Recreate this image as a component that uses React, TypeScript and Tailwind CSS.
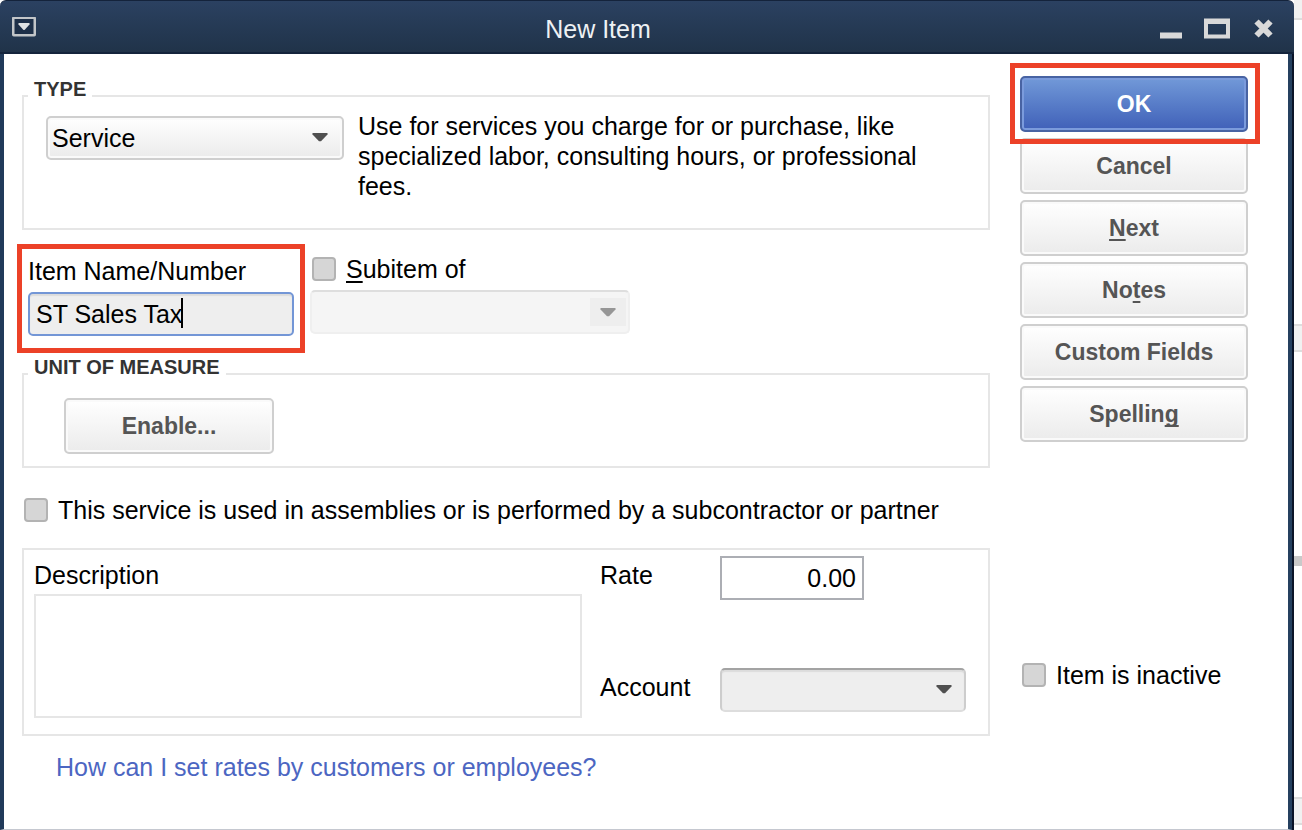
import type { ReactNode } from "react";

function Chevron({ className = "" }: { className?: string }) {
  return (
    <svg
      viewBox="0 0 16 10"
      className={`pointer-events-none h-2.5 w-4 ${className}`}
      fill="currentColor"
      aria-hidden="true"
    >
      <path d="M0.500 1h15v1.500L9 9.300H7L0.500 2.500z" />
    </svg>
  );
}

function GroupBox({ title, className, children }: { title: string; className: string; children: ReactNode }) {
  return (
    <fieldset className={`min-w-0 border-2 border-[#e6e6e6] ${className}`}>
      <legend className="ml-1 px-1.5 pb-3.5 text-[20px] leading-4 font-bold text-[#333333]">{title}</legend>
      {children}
    </fieldset>
  );
}

function Check({ id, children }: { id: string; children: ReactNode }) {
  return (
    <div className="flex items-center gap-2.5 pl-0.5">
      <input
        id={id}
        type="checkbox"
        className="size-6 shrink-0 appearance-none rounded-[4px] border-2 border-[#b3b3b3] bg-[#d6d6d6] checked:bg-[#8fa9dc]"
      />
      <label htmlFor={id}>{children}</label>
    </div>
  );
}

function Key({ children }: { children: ReactNode }) {
  return (
    <u className="underline decoration-2 underline-offset-3 [text-decoration-skip-ink:none]">{children}</u>
  );
}

function PushButton({ children }: { children: ReactNode }) {
  return (
    <button
      type="button"
      className="h-14 w-full rounded-[5px] border-2 border-[#cfcfcf] bg-linear-to-b from-white to-[#ebebeb] text-[23px] font-bold text-[#555555] shadow-[inset_0_0_0_2px_#fafafa]"
    >
      {children}
    </button>
  );
}

function TitleBar() {
  return (
    <header className="flex h-[54px] items-center rounded-t-md border-t border-b-2 border-t-[#14233b] border-b-[#14243c] bg-linear-to-b from-[#2b4161] to-[#203349] pr-[18px] pl-3 text-[#d6d9dc]">
      <button type="button" aria-label="Window menu" className="h-5 w-6">
        <svg viewBox="0 0 24 20" className="h-5 w-6" aria-hidden="true">
          <rect x="1.250" y="0.750" width="21.500" height="17.500" rx="0.500" fill="#1d2f48" stroke="#c2c5c8" strokeWidth="2.500" />
          <path d="M6.500 6h11v1.500L12.500 13h-1L6.500 7.500z" fill="#dfe1e3" />
        </svg>
      </button>
      <h1 className="flex-1 pt-1 text-center text-[25px] leading-[30px] text-[#eef1f4]">New Item</h1>
      <div className="flex items-center gap-5 pt-1">
        <button type="button" aria-label="Minimize" className="h-6 w-6">
          <svg viewBox="0 0 24 24" className="size-6" aria-hidden="true">
            <rect x="0" y="15.500" width="22" height="6" fill="#d9d9d9" />
          </svg>
        </button>
        <button type="button" aria-label="Maximize" className="h-6 w-7">
          <svg viewBox="0 0 28 24" className="h-6 w-7" aria-hidden="true">
            <path d="M0 1.500h26v20H0z M4 7v10.500h18V7z" fill="#d9d9d9" fillRule="evenodd" />
          </svg>
        </button>
        <button type="button" aria-label="Close" className="h-6 w-6">
          <svg viewBox="0 0 24 24" className="size-6" aria-hidden="true">
            <path d="M4.500 4.500 18.500 18.500M18.500 4.500 4.500 18.500" stroke="#d9d9d9" strokeWidth="6" />
          </svg>
        </button>
      </div>
    </header>
  );
}

export default function App() {
  return (
    <div className="flex min-h-screen bg-white font-['Liberation_Sans',Arial,sans-serif] text-[25px] leading-[30px] text-black">
      <div className="flex min-w-0 flex-1 flex-col">
        <TitleBar />
        <main className="flex flex-1 border-r-2 border-r-[#0a1428]">
          <form className="flex flex-1 gap-[30px] border-r-4 border-b border-l-4 border-r-[#25405f] border-b-[#c5c8d0] border-l-[#213a5a] bg-white pt-[22px] pr-10 pl-[18px]">
            <div className="flex min-w-0 flex-1 flex-col pt-[5px]">
              <GroupBox title="TYPE" className="pb-[27px]">
                <div className="flex gap-3.5 pr-10 pl-[22px]">
                  <div className="relative mt-[5px] h-11 w-[298px] shrink-0">
                    <select
                      aria-label="Type"
                      className="size-full appearance-none rounded-[5px] border-2 border-[#cfcfcf] bg-linear-to-b from-white to-[#ebebeb] pl-1 shadow-[inset_0_0_0_2px_#fafafa]"
                    >
                      <option>Service</option>
                    </select>
                    <Chevron className="absolute top-4 right-4 text-[#505050]" />
                  </div>
                  <p>
                    Use for services you charge for or purchase, like specialized labor, consulting hours, or
                    professional fees.
                  </p>
                </div>
              </GroupBox>

              <div className="mt-6 flex gap-4 pl-1.5">
                <div className="relative mt-0.5 flex w-[266px] flex-col gap-1.5">
                  <label htmlFor="item-name">Item Name/Number</label>
                  <div className="relative h-11">
                    <input
                      id="item-name"
                      defaultValue="ST Sales Tax"
                      className="size-full rounded-[5px] border-2 border-[#7396d6] bg-[#eeeeee] pl-1.5 caret-transparent shadow-[inset_0_2px_1px_#dcdcdc] outline-none"
                    />
                    <span className="absolute top-1.5 left-[153px] h-[30px] w-0.5 bg-black" />
                  </div>
                  <div className="pointer-events-none absolute -inset-x-[11px] -top-3 -bottom-[17px] border-5 border-[#ec4128]" />
                </div>
                <div className="flex w-80 flex-col gap-1.5">
                  <Check id="subitem">
                    <Key>S</Key>ubitem of
                  </Check>
                  <div className="relative h-11">
                    <select
                      aria-label="Parent item"
                      disabled
                      className="size-full appearance-none rounded-[5px] border-2 border-[#efefef] border-t-[#dedede] bg-[#f5f5f5]"
                    />
                    <span className="absolute top-2 right-1 flex h-7 w-9 items-center justify-center bg-[#eeeeee]">
                      <Chevron className="text-[#969696]" />
                    </span>
                  </div>
                </div>
              </div>

              <GroupBox title="UNIT OF MEASURE" className="mt-[23px] pt-[9px] pb-3">
                <div className="ml-10 w-[210px]">
                  <PushButton>Enable...</PushButton>
                </div>
              </GroupBox>

              <div className="mt-[27px]">
                <Check id="assemblies">
                  This service is used in assemblies or is performed by a subcontractor or partner
                </Check>
              </div>

              <section className="mt-[23px] flex gap-[18px] border-2 border-[#e6e6e6] pt-1.5 pr-[22px] pb-4 pl-2.5">
                <div className="flex flex-1 flex-col gap-1 pt-1">
                  <label htmlFor="description">Description</label>
                  <textarea
                    id="description"
                    className="h-[124px] w-full resize-none border-2 border-[#e6e6e6] bg-white px-1.5 outline-none"
                  />
                </div>
                <div className="grid grid-cols-[120px_246px] content-start gap-y-[68px]">
                  <label htmlFor="rate" className="pt-1">
                    Rate
                  </label>
                  <input
                    id="rate"
                    defaultValue="0.00"
                    className="h-11 w-36 border-2 border-[#acaeb4] bg-white pr-1.5 text-right outline-none"
                  />
                  <label htmlFor="account" className="pt-1">
                    Account
                  </label>
                  <div className="relative h-11">
                    <select
                      id="account"
                      className="size-full appearance-none rounded-[5px] border-2 border-[#cdcdcd] border-t-[#a3a3a3] border-b-[#dddddd] bg-[#eeeeee] shadow-[inset_0_2px_1px_#dcdcdc]"
                    />
                    <Chevron className="absolute top-4 right-3.5 text-[#505050]" />
                  </div>
                </div>
              </section>

              <p className="mt-4 pl-[34px]">
                <a href="#rates" className="text-[#4c66c2]">
                  How can I set rates by customers or employees?
                </a>
              </p>
            </div>

            <div className="flex w-[228px] shrink-0 flex-col gap-1.5">
              <div className="relative z-10 h-14">
                <button
                  type="submit"
                  className="size-full rounded-[5px] border-2 border-[#4863a3] bg-linear-to-b from-[#7299d8] to-[#4060b8] text-[23px] font-bold text-white shadow-[inset_0_0_0_2px_#7b9bdc]"
                >
                  OK
                </button>
                <div className="pointer-events-none absolute -top-[13px] -right-3 -bottom-3 -left-2.5 border-5 border-[#ec4128]" />
              </div>
              <PushButton>Cancel</PushButton>
              <PushButton>
                <Key>N</Key>ext
              </PushButton>
              <PushButton>
                No<Key>t</Key>es
              </PushButton>
              <PushButton>Custom Fields</PushButton>
              <PushButton>
                Spellin<Key>g</Key>
              </PushButton>
              <div className="mt-[212px]">
                <Check id="inactive">Item is inactive</Check>
              </div>
            </div>
          </form>
        </main>
      </div>

      <div className="flex w-2 shrink-0 flex-col bg-white" aria-hidden="true">
        <div className="h-5 border-b-2 border-[#dddddd] bg-[#f1f1f1]" />
        <div className="mt-[304px] h-7 border-y-2 border-[#dddddd] bg-[#f1f1f1]" />
        <div className="mt-[204px] h-2.5 bg-[#c9c9c9]" />
        <div className="mt-[231px] h-7 border-y-2 border-[#dddddd] bg-[#f1f1f1]" />
      </div>
    </div>
  );
}
